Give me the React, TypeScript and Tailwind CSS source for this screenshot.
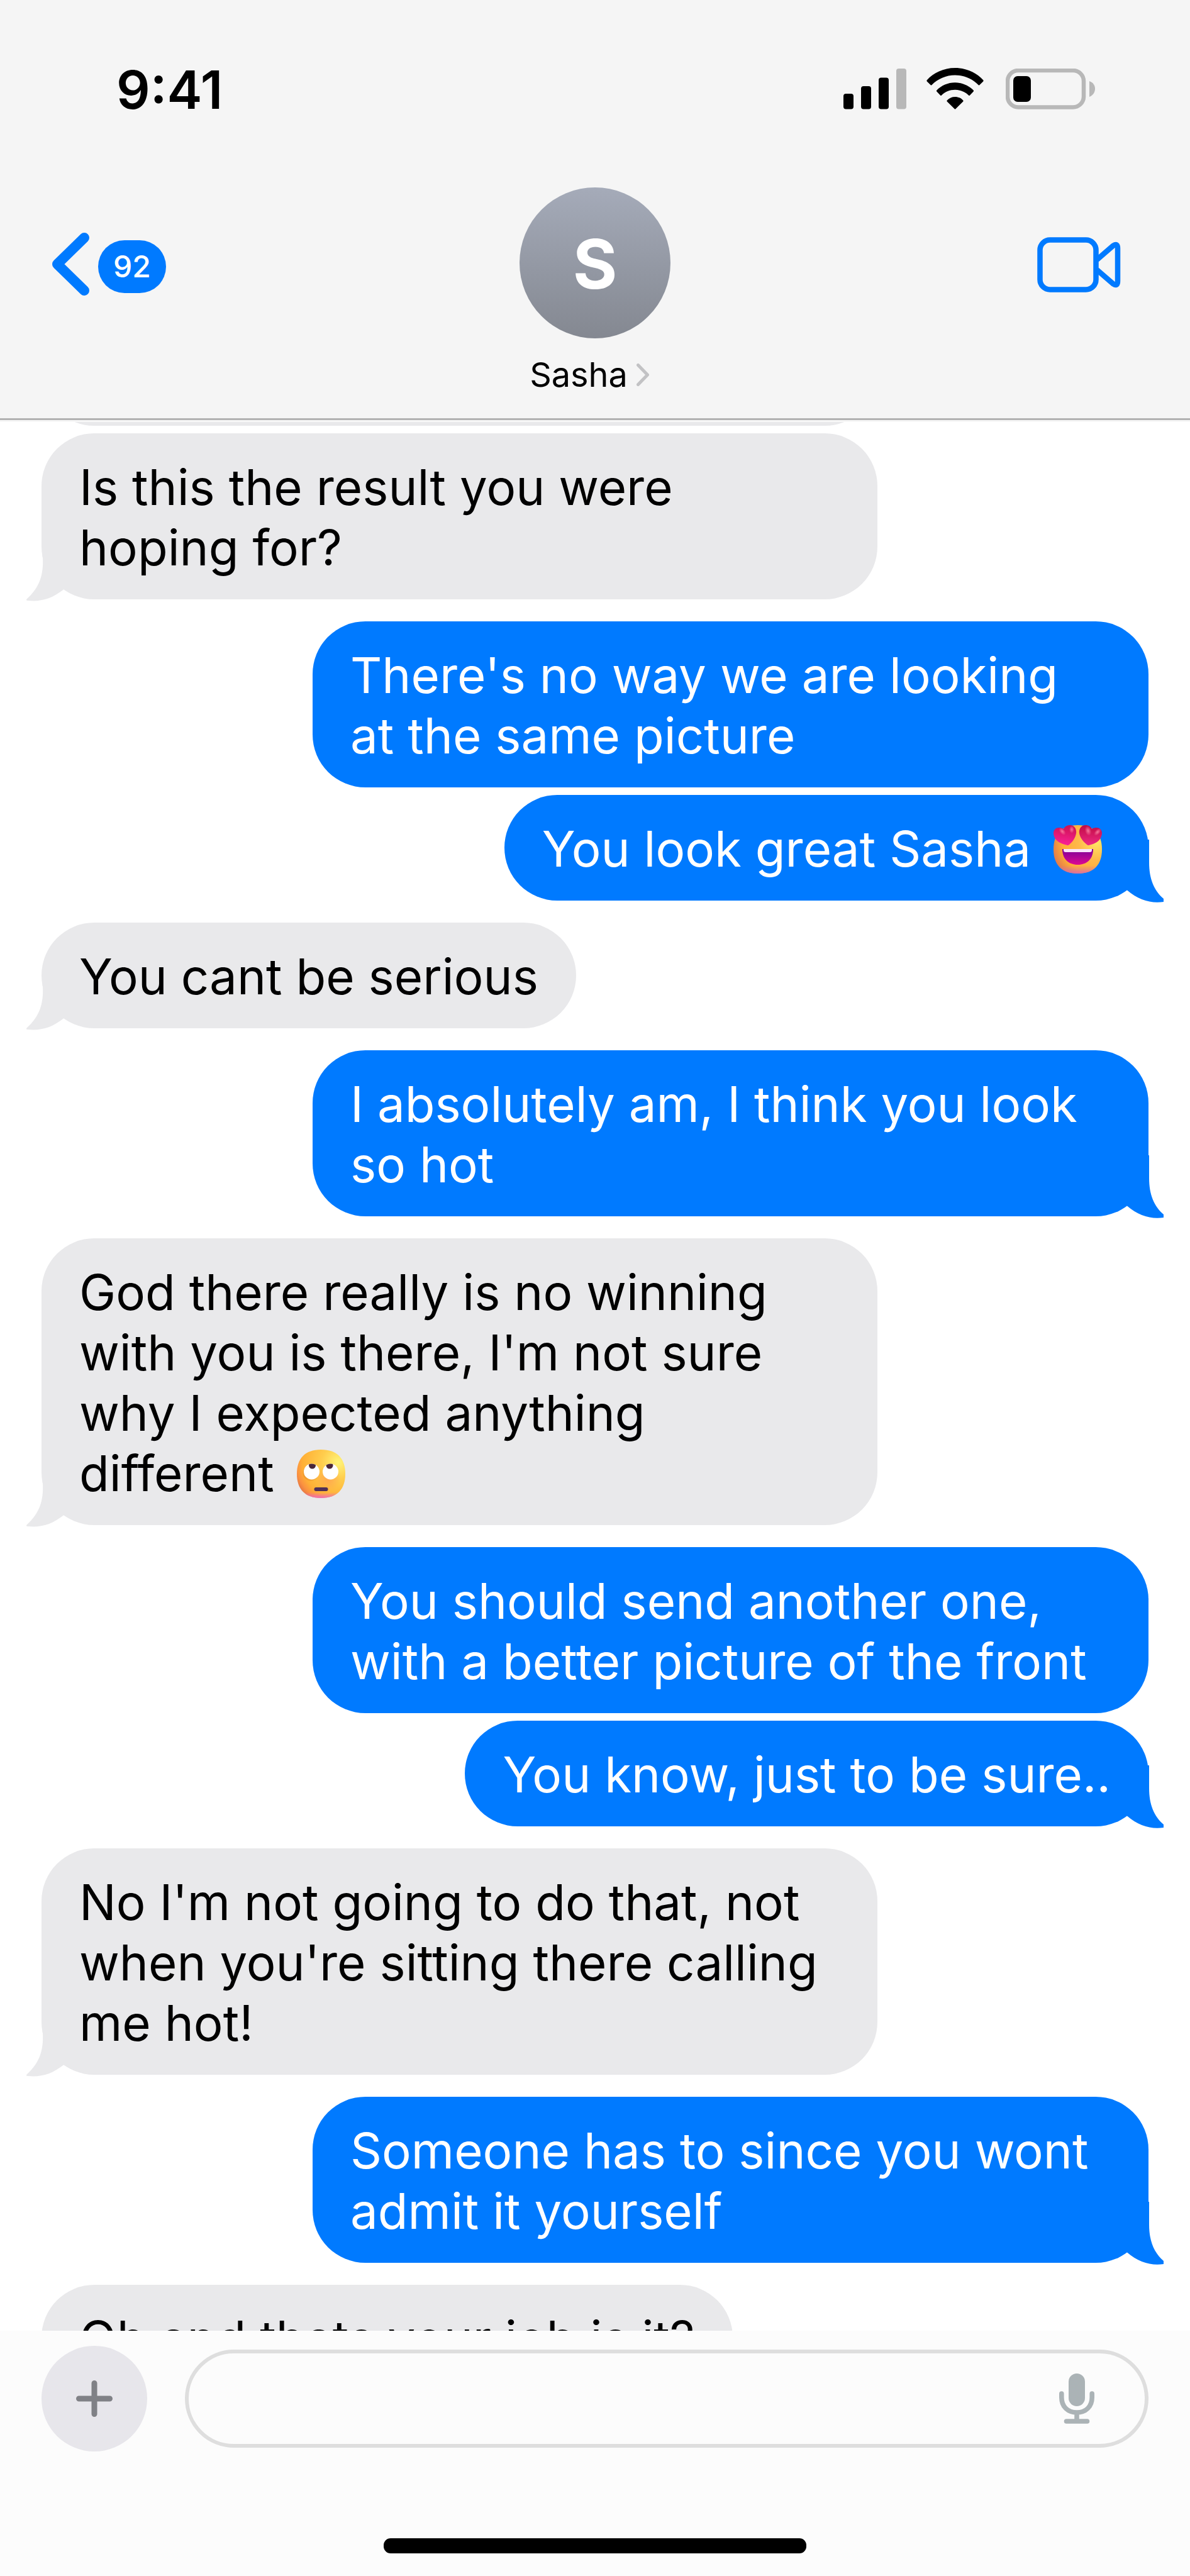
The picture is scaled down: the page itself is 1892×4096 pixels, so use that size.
import React from "react";

interface Message {
  id: number;
  from: "me" | "them";
  text: string;
  emoji?: React.ReactNode;
  isLast?: boolean;
}

const EyeRollEmoji = () => (
  <svg
    viewBox="0 0 77 77"
    role="img"
    aria-label="face with rolling eyes"
    className="mx-3.5 inline-block h-[77px] w-[77px] align-[-11px]"
  >
    <defs>
      <radialGradient id="roll-face" cx="66" cy="20" r="76" gradientUnits="userSpaceOnUse">
        <stop offset="0" stopColor="#fff478" />
        <stop offset="0.35" stopColor="#ffcd4d" />
        <stop offset="0.75" stopColor="#ffb036" />
        <stop offset="0.88" stopColor="#fb9240" />
        <stop offset="1" stopColor="#de6f45" />
      </radialGradient>
      <radialGradient id="roll-cheek" cx="50" cy="46" r="20" gradientUnits="userSpaceOnUse">
        <stop offset="0" stopColor="#ff9f52" stopOpacity="0.8" />
        <stop offset="1" stopColor="#ff9f52" stopOpacity="0" />
      </radialGradient>
      <linearGradient id="roll-chin" x1="38" y1="68" x2="38" y2="78" gradientUnits="userSpaceOnUse">
        <stop offset="0" stopColor="#ee65c4" stopOpacity="0" />
        <stop offset="1" stopColor="#ee65c4" />
      </linearGradient>
      <clipPath id="roll-left">
        <circle cx="23.5" cy="35" r="12.5" />
      </clipPath>
      <clipPath id="roll-right">
        <circle cx="53.5" cy="35" r="12.5" />
      </clipPath>
    </defs>
    <path
      d="M38.5 0C64 0 77 14 77 38.5S64 77 38.5 77 0 63 0 38.5 13 0 38.5 0Z"
      fill="url(#roll-face)"
    />
    <path
      d="M38.5 0C64 0 77 14 77 38.5S64 77 38.5 77 0 63 0 38.5 13 0 38.5 0Z"
      fill="url(#roll-cheek)"
    />
    <path
      d="M38.5 0C64 0 77 14 77 38.5S64 77 38.5 77 0 63 0 38.5 13 0 38.5 0Z"
      fill="url(#roll-chin)"
    />
    <circle cx="22" cy="37" r="12.5" fill="#e08a2c" opacity="0.45" />
    <circle cx="23.5" cy="35" r="12.5" fill="#fff" />
    <circle cx="53.5" cy="35" r="12.5" fill="#fff" />
    <circle cx="24.5" cy="25" r="5.5" fill="#4a2638" clipPath="url(#roll-left)" />
    <circle cx="52" cy="25" r="5.5" fill="#4a2638" clipPath="url(#roll-right)" />
    <rect x="27.5" y="60" width="22" height="6" rx="3" fill="#4f2f56" />
  </svg>
);

const HeartEyesEmoji = () => (
  <svg
    viewBox="0 0 77 77"
    role="img"
    aria-label="smiling face with heart eyes"
    className="mx-3.5 inline-block h-[77px] w-[77px] align-[-11px]"
  >
    <defs>
      <radialGradient id="love-face" cx="68" cy="26" r="72" gradientUnits="userSpaceOnUse">
        <stop offset="0" stopColor="#ffe866" />
        <stop offset="0.4" stopColor="#ffb84a" />
        <stop offset="0.75" stopColor="#ffad36" />
        <stop offset="1" stopColor="#e27a4c" />
      </radialGradient>
      <linearGradient id="love-chin" x1="38" y1="64" x2="38" y2="78" gradientUnits="userSpaceOnUse">
        <stop offset="0" stopColor="#d86bab" stopOpacity="0" />
        <stop offset="1" stopColor="#d86bab" />
      </linearGradient>
      <linearGradient id="love-mouth" x1="38" y1="40" x2="38" y2="63" gradientUnits="userSpaceOnUse">
        <stop offset="0" stopColor="#840099" />
        <stop offset="1" stopColor="#dd0892" />
      </linearGradient>
      <linearGradient id="love-left" x1="22" y1="2" x2="18" y2="32" gradientUnits="userSpaceOnUse">
        <stop offset="0" stopColor="#cf1355" />
        <stop offset="1" stopColor="#fa2098" />
      </linearGradient>
      <linearGradient id="love-right" x1="58" y1="2" x2="58" y2="32" gradientUnits="userSpaceOnUse">
        <stop offset="0" stopColor="#c40d47" />
        <stop offset="1" stopColor="#ec2a84" />
      </linearGradient>
      <radialGradient id="love-shine">
        <stop offset="0" stopColor="#f7779c" />
        <stop offset="1" stopColor="#f7779c" stopOpacity="0" />
      </radialGradient>
    </defs>
    <path
      d="M38.5 0C64 0 77 14 77 38.5S64 77 38.5 77 0 63 0 38.5 13 0 38.5 0Z"
      fill="url(#love-face)"
    />
    <path
      d="M38.5 0C64 0 77 14 77 38.5S64 77 38.5 77 0 63 0 38.5 13 0 38.5 0Z"
      fill="url(#love-chin)"
    />
    <path
      d="M22 32C12 30 3 25 1 18C-2 10 2 4 9 4C12 4 15 5 16 6C18 2 22 0 26 0C33 0 37 6 36 13C35 20 30 27 25 31Q23.500 32.500 22 32Z"
      fill="url(#love-left)"
    />
    <path
      d="M56 32C66 30 74 25 76 18C79 10 75 4 68 4C65 4 62 5 61 6C59 2 55 0 51 0C44 0 40 6 41 13C42 20 48 27 53 31Q54.500 32.500 56 32Z"
      fill="url(#love-right)"
    />
    <ellipse cx="14" cy="10" rx="4" ry="7" fill="url(#love-shine)" transform="rotate(-40 14 10)" />
    <ellipse cx="29" cy="7" rx="4" ry="6" fill="url(#love-shine)" />
    <ellipse cx="55" cy="9" rx="5" ry="8" fill="url(#love-shine)" transform="rotate(-15 55 9)" />
    <ellipse cx="70" cy="11" rx="4" ry="7" fill="url(#love-shine)" transform="rotate(45 70 11)" />
    <path d="M14 38H63C63 54 53 63 38.500 63S14 54 14 38Z" fill="url(#love-mouth)" />
    <path d="M16 38H61V40Q61 43 58 43H19Q16 43 16 40Z" fill="#f9e4fb" />
  </svg>
);

const messages: Message[] = [
  { id: 1, from: "them", text: "Is this the result you were hoping for?", isLast: true },
  { id: 2, from: "me", text: "There's no way we are looking at the same picture" },
  { id: 3, from: "me", text: "You look great Sasha ", emoji: <HeartEyesEmoji />, isLast: true },
  { id: 4, from: "them", text: "You cant be serious", isLast: true },
  { id: 5, from: "me", text: "I absolutely am, I think you look so hot", isLast: true },
  {
    id: 6,
    from: "them",
    text: "God there really is no winning with you is there, I'm not sure why I expected anything different ",
    emoji: <EyeRollEmoji />,
    isLast: true,
  },
  { id: 7, from: "me", text: "You should send another one, with a better picture of the front" },
  { id: 8, from: "me", text: "You know, just to be sure..", isLast: true },
  {
    id: 9,
    from: "them",
    text: "No I'm not going to do that, not when you're sitting there calling me hot!",
    isLast: true,
  },
  { id: 10, from: "me", text: "Someone has to since you wont admit it yourself", isLast: true },
  { id: 11, from: "them", text: "Oh and thats your job is it?", isLast: true },
];

const LeftTail = () => (
  <svg
    viewBox="0 0 64 88"
    aria-hidden="true"
    className="absolute -bottom-1 -left-[26px] h-[88px] w-16 text-[#e9e9eb]"
  >
    <path
      d="M27 10L28 18C29.500 46 22 66 3 83C1 85 2 86 4 86C26 88 42 83 61 68.500V10Z"
      fill="currentColor"
    />
  </svg>
);

const RightTail = () => (
  <svg
    viewBox="0 0 60 104"
    aria-hidden="true"
    className="absolute -right-6 -bottom-1 h-[104px] w-[60px] text-[#007aff]"
  >
    <path d="M2 3H37V39C37 66 45 84 60 97V102C40 105 20 99 2 83.500Z" fill="currentColor" />
  </svg>
);

const Bubble = ({ message }: { message: Message }) => {
  const mine = message.from === "me";
  return (
    <li
      className={`flex ${mine ? "justify-end" : "justify-start"} ${message.isLast ? "mb-[35px]" : "mb-3"}`}
    >
      <div
        className={`relative max-w-[1329px] rounded-[84px] px-[60px] pt-[38px] pb-[34px] ${
          mine ? "bg-[#007aff] text-white" : "bg-[#e9e9eb] text-black"
        }`}
      >
        {message.isLast && (mine ? <RightTail /> : <LeftTail />)}
        <p className="relative text-[78px] leading-[96px]">
          {message.text}
          {message.emoji}
        </p>
      </div>
    </li>
  );
};

const StatusBar = () => (
  <div className="flex items-center justify-between pr-[151px] pl-[185px]">
    <span className="pt-1 text-[84px] leading-[62px] font-semibold">9:41</span>
    <div className="flex items-center">
      <svg viewBox="0 0 100 65" className="h-[65px] w-[100px]" aria-label="Signal">
        <rect x="0" y="40" width="16" height="24.500" rx="4" />
        <rect x="28" y="28" width="16" height="36.500" rx="4" />
        <rect x="56" y="14.500" width="16" height="50" rx="4" />
        <rect x="84" y="0" width="16" height="64.500" rx="4" fill="#b8b8b8" />
      </svg>
      <svg viewBox="0 0 91 66" className="ml-8 h-[66px] w-[91px]" aria-label="Wi-Fi">
        <path d="M.6 19.500C11 8 27 0 45.500 0S80 8 90.400 19.500Q91 20.500 90.200 21.400L84.500 27Q83.500 28 82.500 27C73 17.500 60 11.500 45.500 11.500S18 17.500 8.500 27Q7.500 28 6.500 27L.8 21.400Q0 20.500 .6 19.500Z" />
        <path d="M16.300 35.500C23.500 28 34 23.300 45.500 23.300S67.500 28 74.700 35.500Q75.500 36.500 74.700 37.400L69 43.500Q68 44.500 67 43.500C61.500 38 54 34.800 45.500 34.800S29.500 38 24 43.500Q23 44.500 22 43.500L16.300 37.400Q15.500 36.500 16.300 35.500Z" />
        <path d="M32.800 51.500C36 48 40.500 46 45.500 46S55 48 58.200 51.500Q59 52.500 58.200 53.500L46.500 65Q45.500 66 44.500 65L32.800 53.500Q32 52.500 32.800 51.500Z" />
      </svg>
      <svg viewBox="0 0 142 65" className="ml-[35px] h-[65px] w-[142px]" aria-label="Battery">
        <rect x="3" y="3" width="121" height="58.500" rx="17" fill="none" stroke="#b8b8b8" strokeWidth="6.500" />
        <rect x="12" y="12" width="28" height="41" rx="7" />
        <path d="M133 20C145 24 145 40 133 45Z" fill="#b8b8b8" />
      </svg>
    </div>
  </div>
);

const ChatHeader = () => (
  <header className="shrink-0 border-b-[3px] border-[#f7f7f7] bg-[#f5f5f5]">
    <div className="border-b-[3px] border-[#b2b2b2] pt-[108px] pb-[33px]">
      <StatusBar />
      <div className="mt-[124px] grid grid-cols-3 items-start">
        <div className="flex h-[252px] items-center pl-[82px]">
          <button type="button" aria-label="Back, 92 unread" className="flex items-center gap-3.5">
            <svg viewBox="0 0 60 108" className="h-[108px] w-[60px]" aria-hidden="true">
              <path
                d="M52 8L9 50L52 92"
                fill="none"
                stroke="#007aff"
                strokeWidth="16"
                strokeLinecap="round"
                strokeLinejoin="round"
              />
            </svg>
            <span className="flex h-[84px] w-[108px] items-center justify-center rounded-[42px] bg-[#007aff] text-5xl font-medium text-white">
              92
            </span>
          </button>
        </div>
        <button type="button" className="flex flex-col items-center">
          <span className="flex h-60 w-60 items-center justify-center rounded-full bg-linear-to-b from-[#a5abb9] to-[#848891] pt-1 text-[108px] font-bold text-white">
            S
          </span>
          <span className="mt-[22px] flex items-center gap-3.5 pr-[18px] text-[54px] leading-[72px]">
            Sasha
            <svg viewBox="0 0 20 36" className="h-9 w-5" aria-hidden="true">
              <path
                d="M2.500 2.500L17.500 18L2.500 33.500"
                fill="none"
                stroke="#c2c2c4"
                strokeWidth="5"
                strokeLinecap="round"
                strokeLinejoin="round"
              />
            </svg>
          </span>
        </button>
        <div className="flex h-[252px] items-center justify-end pr-[110px]">
          <button type="button" aria-label="Video call">
            <svg
              viewBox="0 0 133 94"
              className="h-[94px] w-[133px]"
              fill="none"
              stroke="#007aff"
              strokeWidth="8.500"
              strokeLinejoin="round"
            >
              <rect x="4.500" y="4.500" width="89" height="79" rx="16" />
              <path d="M95 36L121 13.500Q128 9 128 18V70Q128 79 121 74.500L95 52" />
            </svg>
          </button>
        </div>
      </div>
    </div>
  </header>
);

const Composer = () => (
  <footer className="flex shrink-0 flex-col bg-[#fcfcfc] pt-6 pb-9">
    <div className="flex items-center gap-[60px] px-[66px]">
      <button
        type="button"
        aria-label="Add attachment"
        className="flex h-[168px] w-[168px] shrink-0 items-center justify-center rounded-full bg-[#e7e6eb]"
      >
        <svg viewBox="0 0 58 58" className="h-[58px] w-[58px]" aria-hidden="true">
          <path d="M29 4.500V53.500M4.500 29H53.500" stroke="#808186" strokeWidth="9" strokeLinecap="round" />
        </svg>
      </button>
      <div className="flex h-[156px] grow items-center rounded-full border-[6px] border-[#dedede] pr-20 pl-[60px]">
        <input
          type="text"
          aria-label="Message"
          className="h-full min-w-0 grow bg-transparent text-[78px] outline-none"
        />
        <button type="button" aria-label="Dictate">
          <svg viewBox="0 0 56 80" className="h-20 w-14" fill="#abb3b6" aria-hidden="true">
            <rect x="15" y="0" width="26" height="52" rx="13" />
            <path
              d="M3.800 32V38C3.800 53 14 62 28 62S52.200 53 52.200 38V32M28 62V76M11.500 76H44.500"
              fill="none"
              stroke="#abb3b6"
              strokeWidth="7.600"
              strokeLinecap="round"
            />
          </svg>
        </button>
      </div>
    </div>
    <div className="mt-[138px] h-6 w-[672px] self-center rounded-[11px] bg-black" />
  </footer>
);

const App = () => {
  return (
    <div className="flex h-screen w-full flex-col overflow-hidden bg-white font-['Inter',sans-serif] text-black">
      <ChatHeader />
      <main className="min-h-0 grow overflow-hidden px-[66px]">
        {/* earlier message, scrolled up under the header */}
        <div className="-mt-[162px] mb-3 h-[168px] w-[1329px] rounded-[84px] bg-[#e9e9eb]" />
        <ul>
          {messages.map((message) => (
            <Bubble key={message.id} message={message} />
          ))}
        </ul>
      </main>
      <Composer />
    </div>
  );
};

export default App;
